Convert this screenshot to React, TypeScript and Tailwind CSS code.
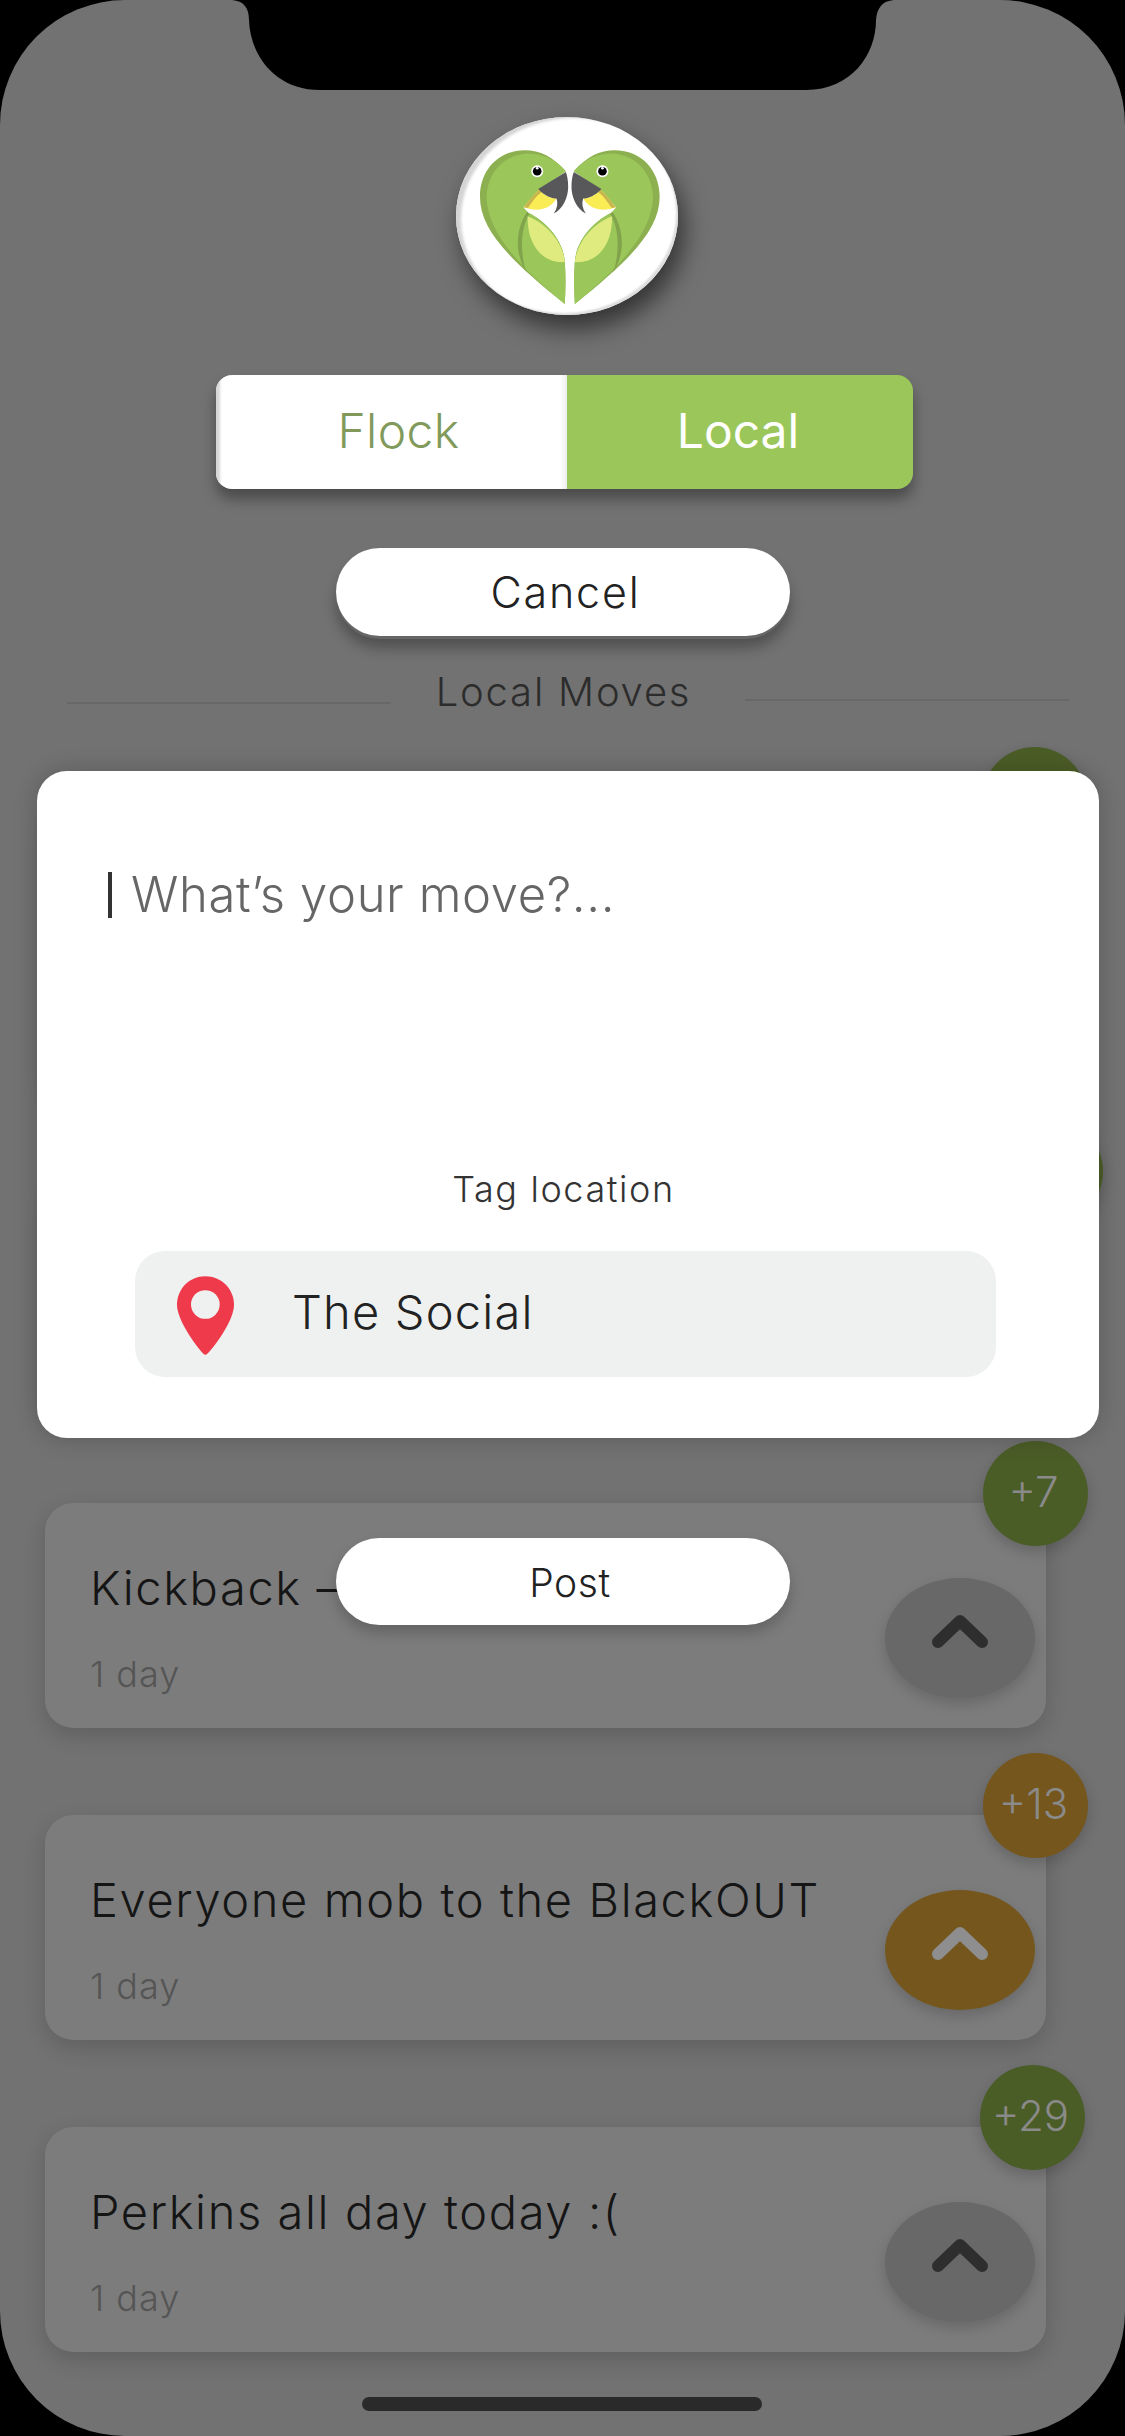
import React from 'react';

const Bird = () => (
  <>
    <path
      d="M438 243C400 200 360 180 315 180C235 180 180 240 180 320C180 420 270 510 435 642C437 600 438 560 435 516C430 450 380 395 325 368L310 352L358 298Z"
      fill="#8cb04f"
    />
    <path
      d="M438 243C405 205 365 190 320 190C250 195 200 250 200 325C205 420 280 515 435 642C437 600 438 560 435 516C430 450 380 395 325 368L310 352L358 298Z"
      fill="#9bc659"
    />
    <path d="M322 365C285 420 285 490 318 545C300 480 302 415 328 372Z" fill="#80a34c" />
    <path d="M323 378C375 398 428 450 435 516C380 520 322 480 323 378Z" fill="#dfeb7f" />
    <path d="M358 298C340 315 325 335 312 352C345 362 385 365 410 325C390 325 372 315 358 298Z" fill="#f9ec55" />
    <path d="M358 298C340 315 325 335 312 352L325 353C335 336 347 320 364 306Z" fill="#c9b54f" />
    <path
      d="M438 245L355 296C372 315 395 325 410 325C415 340 412 355 402 370C430 355 445 320 445 290C445 270 442 255 438 245Z"
      fill="#58585a"
    />
    <circle cx="352" cy="243" r="18" fill="#fff" />
    <circle cx="352" cy="243" r="13" fill="#000" />
    <circle cx="352" cy="234" r="4" fill="#fff" />
  </>
);

const Logo = () => (
  <div className="ml-[9px] w-[222px] h-[198px] rounded-[50%] bg-white flex shadow-[inset_7px_3px_3px_-2px_#d4d4d4,inset_-3px_-3px_2px_-1px_#dddddd,6px_14px_24px_rgba(0,0,0,0.55)]">
    <svg width="222" height="198" viewBox="108 80 667 595">
      <Bird />
      <g transform="translate(900 0) scale(-1 1)">
        <Bird />
      </g>
    </svg>
  </div>
);

const Chevron = ({ color }: { color: string }) => (
  <svg width="56" height="33" viewBox="0 0 56 33" className="mb-[14px]">
    <path d="M6 27L28 6L50 27" fill="none" stroke={color} strokeWidth="12" strokeLinecap="round" strokeLinejoin="round" />
  </svg>
);

const moves = [
  { height: 'h-[285px]', badge: '', badgeRight: 'right-[-41px]', hot: false, hidden: true },
  { height: 'h-[235px]', badge: '', badgeRight: 'right-[-57px]', hot: false, hidden: true },
  { title: 'Kickback –', height: 'h-[225px]', badge: '+7', badgeRight: 'right-[-42px]', hot: false },
  { title: 'Everyone mob to the BlackOUT', height: 'h-[225px]', badge: '+13', badgeRight: 'right-[-42px]', hot: true },
  { title: 'Perkins all day today :(', height: 'h-[225px]', badge: '+29', badgeRight: 'right-[-39px]', hot: false },
];

const App = () => {
  return (
    <div className="relative w-[1125px] h-[2436px] overflow-hidden bg-black font-['Inter',sans-serif]">
      <div className="h-full flex flex-col rounded-[125px] bg-[#727272] pt-[117px]">
        <div className="flex flex-col items-center">
          <Logo />

          <div className="ml-[4px] mt-[60px] w-[697px] h-[114px] flex rounded-[16px] overflow-hidden shadow-[0_10px_14px_rgba(0,0,0,0.35)]">
            <div className="w-[351px] flex items-center justify-center pb-[3px] pl-[14px] bg-white text-[#819a5b] text-[48px] font-light tracking-[0.4px] shadow-[inset_6px_0_3px_-2px_#d6d6d6,inset_-8px_0_6px_-6px_#e6e6e6]">
              Flock
            </div>
            <div className="flex-1 flex items-center justify-center pb-[3px] pr-[4px] bg-[#9bc659] text-white text-[48px] font-normal">
              Local
            </div>
          </div>

          <div className="ml-[1px] mt-[59px] w-[454px] h-[88px] rounded-[44px] bg-white flex items-center justify-center pl-[5px] pt-[1px] text-[#222] text-[43px] font-light tracking-[1.8px] shadow-[0_3px_0_#666666,0_12px_14px_rgba(0,0,0,0.3)]">
            Cancel
          </div>
        </div>

        <div className="mt-[28px] h-[56px] pl-[67px] flex items-center">
          <div className="w-[324px] h-[2px] mt-[22px] bg-[#686868]" />
          <span className="w-[354px] pr-[9px] text-center text-[40px] text-[#2c2c2c] font-light tracking-[1.8px]">Local Moves</span>
          <div className="w-[324px] h-[2px] mt-[16px] bg-[#686868]" />
        </div>

        <div className="mt-[89px] ml-[45px] w-[1001px] flex flex-col gap-[87px]">
          {moves.map((move, index) => (
            <div
              key={index}
              className={`relative ${move.height} flex justify-between rounded-[28px] bg-[#7c7c7c] shadow-[0_8px_22px_rgba(0,0,0,0.16)]`}
            >
              <div className={`absolute top-[-62px] ${move.badgeRight} w-[105px] h-[105px] rounded-full flex items-center justify-center pb-[4px] pr-[4px] text-[42px] font-light text-[#8a8a8a] shadow-[0_6px_14px_rgba(0,0,0,0.18)] ${move.hot ? 'bg-[#75561d]' : 'bg-[#4b5d27]'}`}>
                {move.badge}
              </div>
              {!move.hidden && (
                <>
                  <div className="pl-[45px] pt-[49px]">
                    <div className="text-[47px] leading-[72px] text-[#151515] font-light tracking-[1.6px]">{move.title}</div>
                    <div className="mt-[26px] text-[36px] leading-[48px] text-[#555555] font-light tracking-[1px]">1 day</div>
                  </div>
                  <div className={`self-end mb-[30px] mr-[11px] w-[150px] h-[120px] rounded-[50%] flex items-center justify-center shadow-[0_6px_14px_rgba(0,0,0,0.16)] ${move.hot ? 'bg-[#75561d]' : 'bg-[#686868]'}`}>
                    <Chevron color={move.hot ? '#8e8e8e' : '#2e2e2e'} />
                  </div>
                </>
              )}
            </div>
          ))}
        </div>
      </div>

      {/* notch */}
      <svg className="absolute top-0 left-[232px]" width="662" height="90" viewBox="232 0 662 90">
        <path d="M232 0C244 1 249 8 249 20C250 55 275 90 320 90L806 90C851 90 876 55 876 20C877 8 882 1 894 0Z" fill="#000" />
      </svg>

      {/* composer */}
      <div className="absolute left-[37px] top-[771px] w-[1062px] h-[667px] rounded-[30px] bg-white flex flex-col items-center pt-[94px] shadow-[0_0_24px_rgba(0,0,0,0.2)]">
        <div className="self-start pl-[71px] h-[60px] flex items-center gap-[19px]">
          <div className="w-[4px] h-[46px] bg-[#333]" />
          <span className="text-[49px] text-[#666] font-light tracking-[0.6px]">What’s your move?...</span>
        </div>
        <div className="mt-[243px] mr-[9px] h-[44px] flex items-center pb-[3px] text-[36px] text-[#333] font-light tracking-[1.6px]">Tag location</div>
        <div className="self-start ml-[98px] mt-[39px] w-[861px] h-[126px] rounded-[30px] bg-[#eff1f0] flex items-center pl-[42px] gap-[58px]">
          <svg width="57" height="79" viewBox="141 84 171 236" className="mt-[3px]">
            <path d="M226 84C178 84 141 122 141 170C141 215 195 290 220 317C224 321 228 321 232 317C258 290 312 215 312 170C312 122 274 84 226 84Z" fill="#ee3a4a" />
            <circle cx="226" cy="169" r="43" fill="#eff1f0" />
          </svg>
          <span className="pb-[3px] text-[47px] text-[#222] font-light tracking-[1.2px]">The Social</span>
        </div>
      </div>

      <div className="absolute left-[336px] top-[1538px] w-[454px] h-[87px] rounded-[44px] bg-white flex items-center justify-center pl-[14px] pt-[3px] text-[#222] text-[39px] font-light tracking-[0.6px] shadow-[0_8px_14px_rgba(0,0,0,0.2)]">
        Post
      </div>

      <div className="absolute left-[362px] top-[2397px] w-[400px] h-[14px] rounded-[7px] bg-[#2a2a2a]" />
    </div>
  );
};

export default App;
